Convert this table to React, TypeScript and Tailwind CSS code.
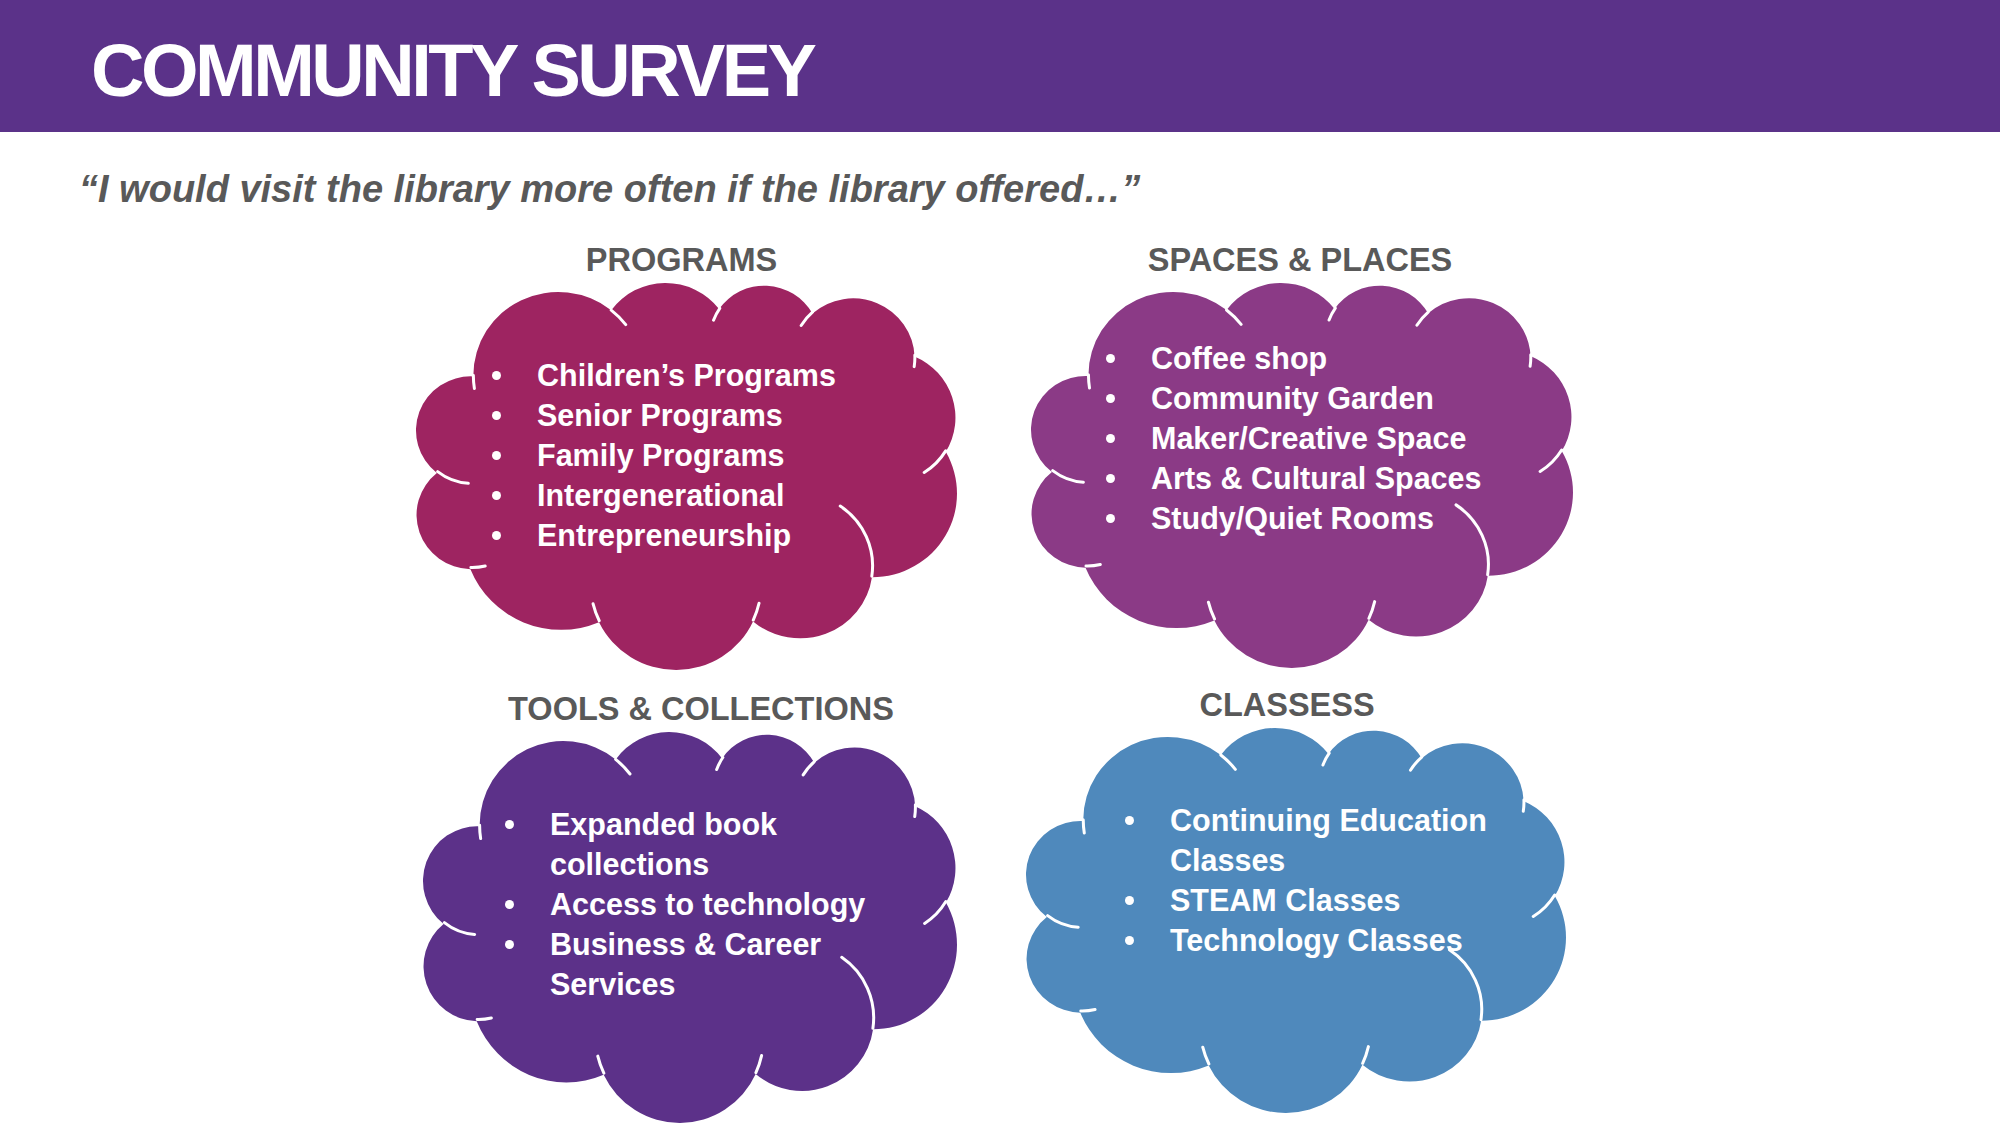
import React from "react";

type Arc = [number, number, number, number];
type Line = [number, number, number, number, number, number];

// preset "cloud" geometry, 43200 x 43200 units, angles in 60000ths of a degree
const START: [number, number] = [3900, 14370];
const OUTLINE: Arc[] = [
  [6753, 9190, -11429249, 7426832],
  [5333, 7267, -8646143, 5396714],
  [4365, 5945, -8748475, 5983381],
  [4857, 6595, -7859164, 7034504],
  [5333, 7273, -4722533, 6541615],
  [6775, 9220, -2776035, 7816140],
  [5785, 7867, 37501, 6842000],
  [6752, 9215, 1347096, 6910353],
  [7720, 10543, 3974558, 4542661],
  [4360, 5918, -16496525, 8804134],
  [4345, 5945, -14809710, 9151131],
];
const CREASES: Line[] = [
  [4693, 26177, 4345, 5945, 5204520, 1585770],
  [6928, 34899, 4360, 5918, 4416628, 686848],
  [16478, 39090, 6752, 9215, 8257449, 844866],
  [28827, 34751, 6752, 9215, 387196, 959901],
  [34129, 22954, 5785, 7867, -4217541, 4255042],
  [41798, 15354, 5333, 7273, 1819082, 1665090],
  [38324, 5426, 4857, 6595, -824660, 891534],
  [29078, 3952, 4857, 6595, -8950887, 1091722],
  [22141, 4720, 4365, 5945, -9809656, 1061181],
  [14000, 5192, 6753, 9190, -4002417, 739161],
  [4127, 15789, 6753, 9190, 9459261, 711490],
];

// the clouds on the slide are turned a little clockwise
function buildCloud(W: number, H: number, deg: number) {
  const sx = W / 43200;
  const sy = H / 43200;
  const th = (deg * Math.PI) / 180;
  const tf = (x: number, y: number): [number, number] => {
    const px = x * sx - W / 2;
    const py = y * sy - H / 2;
    return [px * Math.cos(th) - py * Math.sin(th), px * Math.sin(th) + py * Math.cos(th)];
  };
  let minX = Infinity, minY = Infinity, maxX = -Infinity, maxY = -Infinity;
  const arc = (x: number, y: number, wR: number, hR: number, st: number, sw: number, track: boolean) => {
    const rad = (v: number) => (v / 60000) * (Math.PI / 180);
    const a1 = rad(st);
    const a2 = rad(st + sw);
    const t1 = Math.atan2(wR * Math.sin(a1), hR * Math.cos(a1));
    let d = Math.atan2(wR * Math.sin(a2), hR * Math.cos(a2)) - t1;
    if (sw > 0) while (d < 0) d += 2 * Math.PI;
    else while (d > 0) d -= 2 * Math.PI;
    const cx = x - wR * Math.cos(t1);
    const cy = y - hR * Math.sin(t1);
    const ex = cx + wR * Math.cos(t1 + d);
    const ey = cy + hR * Math.sin(t1 + d);
    if (track) {
      for (let i = 0; i <= 48; i++) {
        const t = t1 + (d * i) / 48;
        const [qx, qy] = tf(cx + wR * Math.cos(t), cy + hR * Math.sin(t));
        minX = Math.min(minX, qx);
        minY = Math.min(minY, qy);
        maxX = Math.max(maxX, qx);
        maxY = Math.max(maxY, qy);
      }
    }
    const [rx, ry] = tf(ex, ey);
    const cmd = `A ${(wR * sx).toFixed(2)} ${(hR * sy).toFixed(2)} ${deg} ${Math.abs(d) > Math.PI ? 1 : 0} ${sw > 0 ? 1 : 0} ${rx.toFixed(2)} ${ry.toFixed(2)}`;
    return { cmd, ex, ey };
  };
  let [x, y] = START;
  const [mx, my] = tf(x, y);
  let d = `M ${mx.toFixed(2)} ${my.toFixed(2)}`;
  for (const [wR, hR, st, sw] of OUTLINE) {
    const a = arc(x, y, wR, hR, st, sw, true);
    d += " " + a.cmd;
    x = a.ex;
    y = a.ey;
  }
  d += " Z";
  let lines = "";
  for (const [lx, ly, wR, hR, st, sw] of CREASES) {
    const [qx, qy] = tf(lx, ly);
    lines += `M ${qx.toFixed(2)} ${qy.toFixed(2)} ${arc(lx, ly, wR, hR, st, sw, false).cmd} `;
  }
  return { d, lines, viewBox: `${minX} ${minY} ${maxX - minX} ${maxY - minY}` };
}

const CLOUD = buildCloud(545, 393, 8);

function CloudShape({ fill }: { fill: string }) {
  return (
    <svg className="absolute inset-0 h-full w-full overflow-visible" viewBox={CLOUD.viewBox} preserveAspectRatio="none">
      <path d={CLOUD.d} fill={fill} />
      <path d={CLOUD.lines} fill="none" stroke="#ffffff" strokeWidth={3} strokeLinecap="round" vectorEffect="non-scaling-stroke" />
    </svg>
  );
}

type Group = {
  title: string;
  fill: string;
  items: string[];
  cell: string;
  head: string;
  box: string;
  list: string;
};

const TOP: Group[] = [
  {
    title: "PROGRAMS",
    fill: "#9e2461",
    items: ["Children’s Programs", "Senior Programs", "Family Programs", "Intergenerational", "Entrepreneurship"],
    cell: "w-[541px]",
    head: "-translate-x-[5px]",
    box: "w-[541px] h-[387px]",
    list: "pt-[72px] pl-[76px]",
  },
  {
    title: "SPACES & PLACES",
    fill: "#8b3a86",
    items: ["Coffee shop", "Community Garden", "Maker/Creative Space", "Arts & Cultural Spaces", "Study/Quiet Rooms"],
    cell: "w-[542px]",
    head: "-translate-x-[2px]",
    box: "w-[542px] h-[385px]",
    list: "pt-[55px] pl-[75px]",
  },
];

const BOTTOM: Group[] = [
  {
    title: "TOOLS & COLLECTIONS",
    fill: "#5c3189",
    items: ["Expanded book\ncollections", "Access to technology", "Business & Career\nServices"],
    cell: "w-[534px] pt-[4px]",
    head: "translate-x-[11px]",
    box: "w-[534px] h-[391px]",
    list: "pt-[72px] pl-[82px]",
  },
  {
    title: "CLASSESS",
    fill: "#4f89bc",
    items: ["Continuing Education\nClasses", "STEAM Classes", "Technology Classes"],
    cell: "w-[540px]",
    head: "-translate-x-[9px]",
    box: "w-[540px] h-[385px]",
    list: "pt-[72px] pl-[99px]",
  },
];

function Cell({ g }: { g: Group }) {
  return (
    <div className={`flex flex-col items-center ${g.cell}`}>
      <h2 className={`text-[32.5px] leading-[36px] font-bold text-[#595959] ${g.head}`}>{g.title}</h2>
      <div className={`relative mt-[5px] ${g.box}`}>
        <CloudShape fill={g.fill} />
        <ul className={`relative flex flex-col ${g.list}`}>
          {g.items.map((it) => (
            <li key={it} className="flex items-start">
              <span className="flex h-[40px] w-[45px] shrink-0 items-center">
                <span className="h-[9px] w-[9px] rounded-full bg-white" />
              </span>
              <span className="whitespace-pre-line text-[30.5px] leading-[40px] font-bold text-white">{it}</span>
            </li>
          ))}
        </ul>
      </div>
    </div>
  );
}

export default function App() {
  return (
    <div className="relative h-[1125px] w-[2000px] overflow-hidden bg-white font-['Liberation_Sans',Arial,sans-serif]">
      <header className="flex h-[132px] items-center bg-[#5b3289] pl-[91px] pt-[9px]">
        <h1 className="text-[74px] leading-none font-bold tracking-[-3.5px] text-white">COMMUNITY SURVEY</h1>
      </header>

      <p className="mt-[35px] pl-[79px] text-[38px] leading-[44px] font-bold italic text-[#595959]">
        “I would visit the library more often if the library offered…”
      </p>

      <div className="mt-[31px] flex gap-[74px] pl-[416px]">
        {TOP.map((g) => (
          <Cell key={g.title} g={g} />
        ))}
      </div>

      <div className="mt-[17px] flex items-start gap-[69px] pl-[423px]">
        {BOTTOM.map((g) => (
          <Cell key={g.title} g={g} />
        ))}
      </div>
    </div>
  );
}
